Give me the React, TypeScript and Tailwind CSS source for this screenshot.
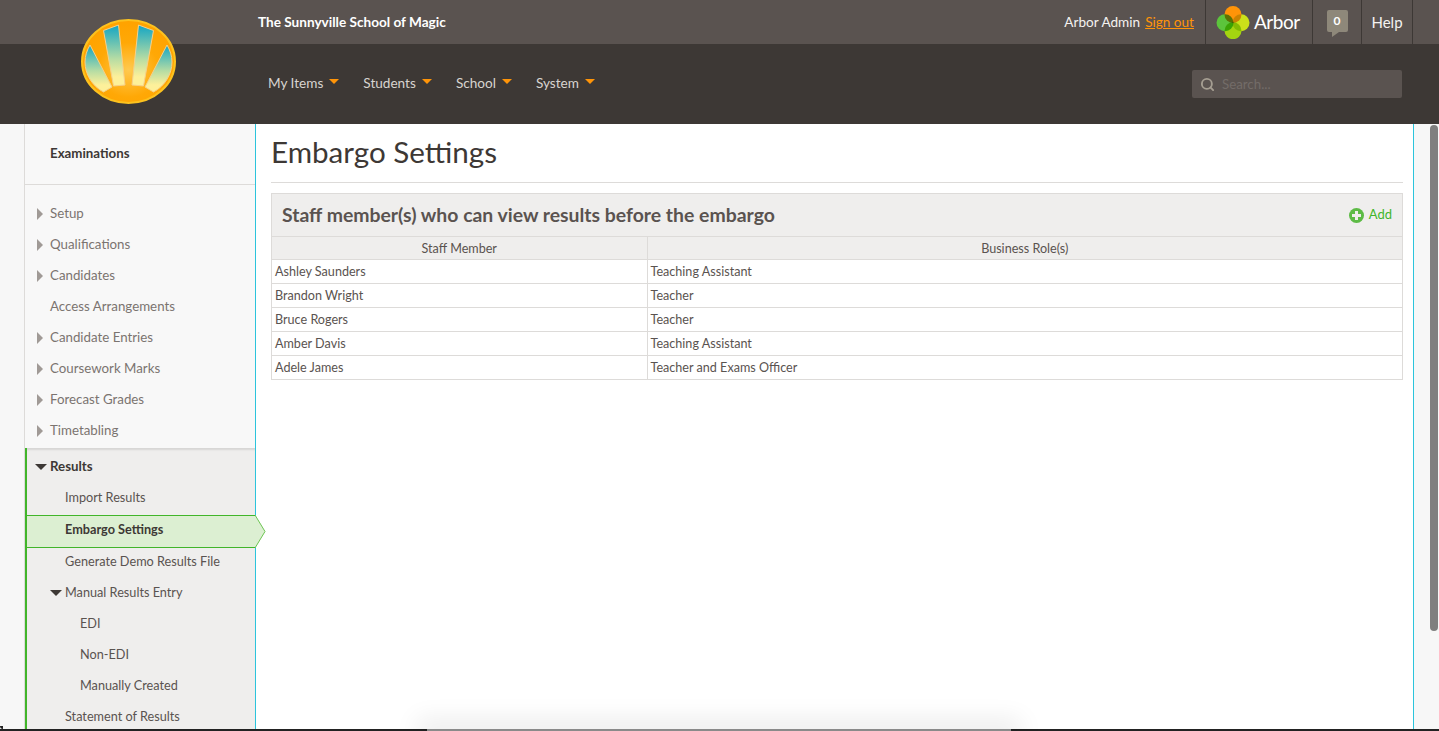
import { Search } from 'lucide-react';

const topItems = [
  { label: 'Setup', arrow: true },
  { label: 'Qualifications', arrow: true },
  { label: 'Candidates', arrow: true },
  { label: 'Access Arrangements', arrow: false },
  { label: 'Candidate Entries', arrow: true },
  { label: 'Coursework Marks', arrow: true },
  { label: 'Forecast Grades', arrow: true },
  { label: 'Timetabling', arrow: true },
];

const staff = [
  ['Ashley Saunders', 'Teaching Assistant'],
  ['Brandon Wright', 'Teacher'],
  ['Bruce Rogers', 'Teacher'],
  ['Amber Davis', 'Teaching Assistant'],
  ['Adele James', 'Teacher and Exams Officer'],
];

const navItems = ['My Items', 'Students', 'School', 'System'];

const SchoolLogo = () => (
  <svg width="96" height="86" viewBox="0 0 96 86" className="absolute left-[81px] top-[19px]">
    <defs>
      <linearGradient id="ray" x1="0" y1="0" x2="0" y2="1">
        <stop offset="0" stopColor="#12a5c4" />
        <stop offset="0.55" stopColor="#b5dca4" />
        <stop offset="0.85" stopColor="#fdf09a" />
      </linearGradient>
      <radialGradient id="sun" cx="0.5" cy="0.6" r="0.55">
        <stop offset="0" stopColor="#ffc94f" />
        <stop offset="0.6" stopColor="#ffa806" />
        <stop offset="1" stopColor="#ffa300" />
      </radialGradient>
    </defs>
    <ellipse cx="47.5" cy="42.5" rx="46.5" ry="41.5" fill="url(#sun)" stroke="#fcc21f" strokeWidth="2" />
    <path d="M22.5 11.5 L37.5 6 L44 66 L32.5 67 Z" fill="url(#ray)" stroke="#f6d08a" strokeWidth="1" />
    <path d="M57.5 6 L72.5 11.5 L62.5 67 L51 66 Z" fill="url(#ray)" stroke="#f6d08a" strokeWidth="1" />
    <path d="M9 26 L31 68 L22.5 73 C11 67 4 55 4 43 C4 37 6 31 9 26 Z" fill="url(#ray)" stroke="#f6d08a" strokeWidth="1" />
    <path d="M86 26 L64 68 L72.5 73 C84 67 91 55 91 43 C91 37 89 31 86 26 Z" fill="url(#ray)" stroke="#f6d08a" strokeWidth="1" />
  </svg>
);

const ArborMark = () => (
  <svg width="34" height="34" viewBox="0 0 34 34" className="isolate shrink-0">
    <circle cx="9" cy="17.7" r="8.5" fill="#5cc43c" className="mix-blend-multiply" />
    <circle cx="25" cy="17.7" r="8.5" fill="#cbe01a" className="mix-blend-multiply" />
    <circle cx="17" cy="25.7" r="8.5" fill="#a4d410" className="mix-blend-multiply" />
    <circle cx="17" cy="9.5" r="8.5" fill="#ff9408" className="mix-blend-multiply" />
  </svg>
);

const Caret = () => <span className="ml-[6px] mt-[-2px] h-0 w-0 border-x-[5px] border-t-[5px] border-x-transparent border-t-[#ff9408]" />;

const ArrowRight = () => <span className="h-0 w-0 border-y-[6px] border-l-[6px] border-y-transparent border-l-[#a09a96]" />;

const ArrowDown = () => <span className="h-0 w-0 border-x-[6px] border-t-[6px] border-x-transparent border-t-[#3d3835]" />;

export default function App() {
  return (
    <div className="relative flex h-[731px] w-[1439px] flex-col overflow-hidden bg-white font-['Lato','Liberation_Sans',sans-serif] text-[13.3px] text-[#5a5350]">
      {/* Header */}
      <div className="flex h-[44px] shrink-0 items-stretch bg-[#5a5350] text-white">
        <div className="ml-[258px] flex items-center text-[13.6px] font-bold">The Sunnyville School of Magic</div>
        <div className="ml-auto flex items-center pr-[11px] text-[13.6px] text-[#f4f2f0]">
          Arbor Admin
          <a className="ml-[5px] text-[#ff9408] underline">Sign out</a>
        </div>
        <div className="flex w-[108px] items-center gap-[4px] border-x border-[#3d3835] pl-[10px]">
          <ArborMark />
          <span className="text-[19px] tracking-[-0.5px]">Arbor</span>
        </div>
        <div className="flex w-[49px] items-center justify-center border-r border-[#3d3835]">
          <div className="relative mt-[-2px] flex h-[22px] w-[21px] items-center justify-center rounded-[2px] bg-[#8e887a] text-[12px] font-bold">
            0
            <span className="absolute bottom-[-5px] left-[5px] h-0 w-0 border-r-[7px] border-t-[5px] border-r-transparent border-t-[#8e887a]" />
          </div>
        </div>
        <div className="mr-[26px] flex w-[51px] items-center justify-center border-r border-[#3d3835] text-[15px] text-[#f4f2f0]">Help</div>
      </div>

      <div className="flex h-[80px] shrink-0 items-center bg-[#3d3835]">
        <nav className="ml-[268px] flex items-center gap-[24px] pb-[2px] text-[13.6px] text-[#d8d4d0]">
          {navItems.map((item) => (
            <div key={item} className="flex items-center">
              {item}
              <Caret />
            </div>
          ))}
        </nav>
        <div className="ml-auto mr-[37px] flex h-[28px] w-[210px] items-center gap-[7px] rounded-[2px] bg-[#5a5350] pl-[8px] pt-[1px] text-[13.3px] text-[#736c68]">
          <Search size={15} strokeWidth={3} className="text-[#a59e92]" />
          Search...
        </div>
      </div>

      <SchoolLogo />

      {/* Body */}
      <div className="flex min-h-0 flex-1">
        <div className="w-[24px] shrink-0 bg-[#f7f7f7]" />

        <aside className="flex w-[232px] shrink-0 flex-col border-x border-l-[#dddbd9] border-r-[#2cc4dc] bg-[#f8f8f8]">
          <div className="flex h-[61px] shrink-0 items-center border-b border-[#dddbd9] pl-[25px] font-bold text-[#3d3835]">
            Examinations
          </div>
          <div className="flex flex-col pt-[13px] text-[#7b7470]">
            {topItems.map((item) => (
              <div key={item.label} className="flex h-[31px] items-center">
                <span className="flex w-[25px] justify-end pr-[7px]">{item.arrow && <ArrowRight />}</span>
                {item.label}
              </div>
            ))}
          </div>

          <div className="relative mt-[2px] flex flex-1 flex-col border-l-2 border-[#41b52a] bg-[#efeeed] pt-[3px] text-[12.7px] text-[#5a5350] shadow-[inset_0_3px_2px_-1px_rgba(0,0,0,0.1)]">
            <div className="flex h-[31px] shrink-0 items-center text-[13.3px] font-bold text-[#3d3835]">
              <span className="flex w-[23px] justify-end pr-[3px]"><ArrowDown /></span>
              Results
            </div>
            <div className="flex h-[31px] shrink-0 items-center pl-[38px]">Import Results</div>
            <div className="relative z-10 mb-[-2px] mt-[2px] flex h-[33px] shrink-0 items-center border-y border-[#41b52a] bg-[#dcefd2] pb-[3px] pl-[38px] font-bold text-[#3d3835]">
              Embargo Settings
              <svg width="11" height="33" viewBox="0 0 11 33" className="absolute left-full top-[-1px]">
                <path d="M0 0 L10 16.5 L0 33 Z" fill="#dcefd2" />
                <path d="M0 0 L10 16.5 L0 33" fill="none" stroke="#6cc452" strokeWidth="1" />
              </svg>
            </div>
            <div className="flex h-[31px] shrink-0 items-center pl-[38px]">Generate Demo Results File</div>
            <div className="flex h-[31px] shrink-0 items-center">
              <span className="flex w-[38px] justify-end pr-[3px]"><ArrowDown /></span>
              Manual Results Entry
            </div>
            <div className="flex h-[31px] shrink-0 items-center pl-[53px]">EDI</div>
            <div className="flex h-[31px] shrink-0 items-center pl-[53px]">Non-EDI</div>
            <div className="flex h-[31px] shrink-0 items-center pl-[53px]">Manually Created</div>
            <div className="flex h-[31px] shrink-0 items-center pl-[38px]">Statement of Results</div>
          </div>
        </aside>

        {/* Main content */}
        <main className="w-[1157px] shrink-0 px-[15px] pr-[10px]">
          <h1 className="flex h-[59px] items-center border-b border-[#dddbd9] pb-[2px] text-[29.6px] font-normal text-[#3d3835]">Embargo Settings</h1>
          <div className="mt-[10px] border border-b-0 border-[#dddbd9]">
            <div className="flex h-[43px] items-center justify-between border-b border-[#dddbd9] bg-[#efeeed] pl-[10px] pr-[10px]">
              <h2 className="text-[19.4px] font-bold text-[#5a5350]">Staff member(s) who can view results before the embargo</h2>
              <span className="flex items-center gap-[5px] text-[13px] text-[#41b52a]">
                <svg width="15" height="15" viewBox="0 0 15 15">
                  <circle cx="7.5" cy="7.5" r="7.5" fill="#5dbb46" />
                  <path d="M6 3h3v3h3v3H9v3H6V9H3V6h3z" fill="#efeeed" />
                </svg>
                Add
              </span>
            </div>
            <table className="w-full table-fixed border-collapse text-[12.6px]">
              <thead>
                <tr className="h-[22px] bg-[#efeeed]">
                  <th className="h-[22px] w-[375px] border-b border-r border-[#dddbd9] p-0 pt-[3px] font-normal">Staff Member</th>
                  <th className="h-[22px] border-b border-[#dddbd9] p-0 pt-[3px] font-normal">Business Role(s)</th>
                </tr>
              </thead>
              <tbody>
                {staff.map(([name, role]) => (
                  <tr key={name} className="h-[24px]">
                    <td className="border-b border-r border-[#dddbd9] pl-[3px] pt-[3px]">{name}</td>
                    <td className="border-b border-[#dddbd9] pl-[3px] pt-[3px]">{role}</td>
                  </tr>
                ))}
              </tbody>
            </table>
          </div>
        </main>

        {/* Scrollbar strip */}
        <div className="relative flex-1 border-l border-[#2cc4dc] bg-[#f7f7f7]">
          <div className="absolute left-[16px] top-[1px] h-[506px] w-[8px] rounded-full bg-[#7f7f7f]" />
        </div>
      </div>

      {/* Window edge at the bottom of the screenshot */}
      <div className="absolute bottom-0 left-0 h-[2px] w-full bg-[#222222]" />
      <div className="absolute bottom-[2px] left-0 h-[3px] w-[3px] rounded-bl-[3px] bg-[#222222]" />
      <div className="absolute bottom-0 left-[427px] h-[2px] w-[584px] bg-[#8a8a8a] shadow-[0_0_24px_10px_rgba(0,0,0,0.08)]" />
    </div>
  );
}
